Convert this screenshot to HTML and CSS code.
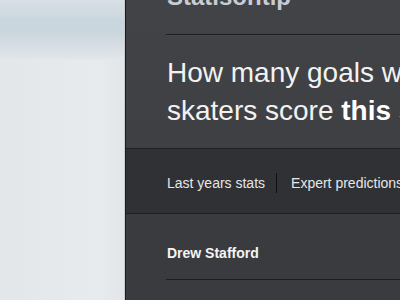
FILE: index.html
```html
<!DOCTYPE html>
<html>
<head>
<meta charset="utf-8">
<link rel="stylesheet" href="styles.css">
</head>
<body>
<div class="page">
  <aside class="sidebar"><div class="glow"></div></aside>
  <main class="main">
    <section class="top">
      <h1 class="brand">Statisontip</h1>
      <div class="rule"></div>
      <p class="question">How many goals will the<br>skaters score <b>this season?</b></p>
    </section>
    <nav class="tabs">
      <span class="tab">Last years stats</span>
      <span class="sep"></span>
      <span class="tab">Expert predictions</span>
    </nav>
    <section class="list">
      <div class="player">Drew Stafford</div>
    </section>
  </main>
</div>
</body>
</html>
```
FILE: styles.css
```css
html, body {
  margin: 0;
  padding: 0;
}
body {
  width: 400px;
  height: 300px;
  overflow: hidden;
  font-family: "Liberation Sans", Arial, sans-serif;
}
.page {
  display: flex;
  height: 300px;
}
.sidebar {
  width: 125px;
  flex: none;
  background: linear-gradient(to right, #e4e7ea, #e8ebee 80%, #e3e6e9);
  border-right: 1px solid #c9cdd1;
  box-sizing: border-box;
  overflow: hidden;
}
.glow {
  height: 60px;
  background: linear-gradient(to bottom, #d9e0e5 0%, #cad6de 35%, #cbd6dd 55%, #e3e7ea 100%);
}
.main {
  flex: 1;
  min-width: 0;
  border-left: 1px solid #1b1c1e;
  background: #3a3b3f;
  overflow: hidden;
  white-space: nowrap;
}
.top {
  display: flow-root;
  background: linear-gradient(to bottom, #414347, #3e4044);
  padding: 0 0 0 40px;
  height: 148px;
  border-bottom: 1px solid #1e1f22;
}
.brand {
  margin: -17px 0 0 1px;
  font-size: 24px;
  line-height: 28px;
  font-weight: bold;
  color: #c9cdd1;
}
.rule {
  margin-top: 23px;
  height: 1px;
  background: #1c1d1f;
  border-bottom: 1px solid #46484c;
}
.question {
  margin: 18px 0 0 1px;
  font-size: 28px;
  line-height: 38px;
  color: #f2f2f2;
  font-weight: normal;
}
.question b {
  color: #ffffff;
}
.tabs {
  height: 60px;
  padding-top: 4px;
  background: #303135;
  border-bottom: 1px solid #1d1e20;
  display: flex;
  align-items: center;
  padding-left: 41px;
  font-size: 14px;
  color: #e6e6e6;
}
.sep {
  flex: none;
  align-self: center;
  width: 1px;
  height: 20px;
  background: #0e0e10;
  margin: 0 14px 0 11px;
}
.list {
  padding-left: 40px;
}
.player {
  height: 53px;
  padding: 12px 0 0 1px;
  display: flex;
  align-items: center;
  font-size: 14px;
  font-weight: bold;
  color: #f4f4f4;
  border-bottom: 1px solid #1d1e20;
}
```
